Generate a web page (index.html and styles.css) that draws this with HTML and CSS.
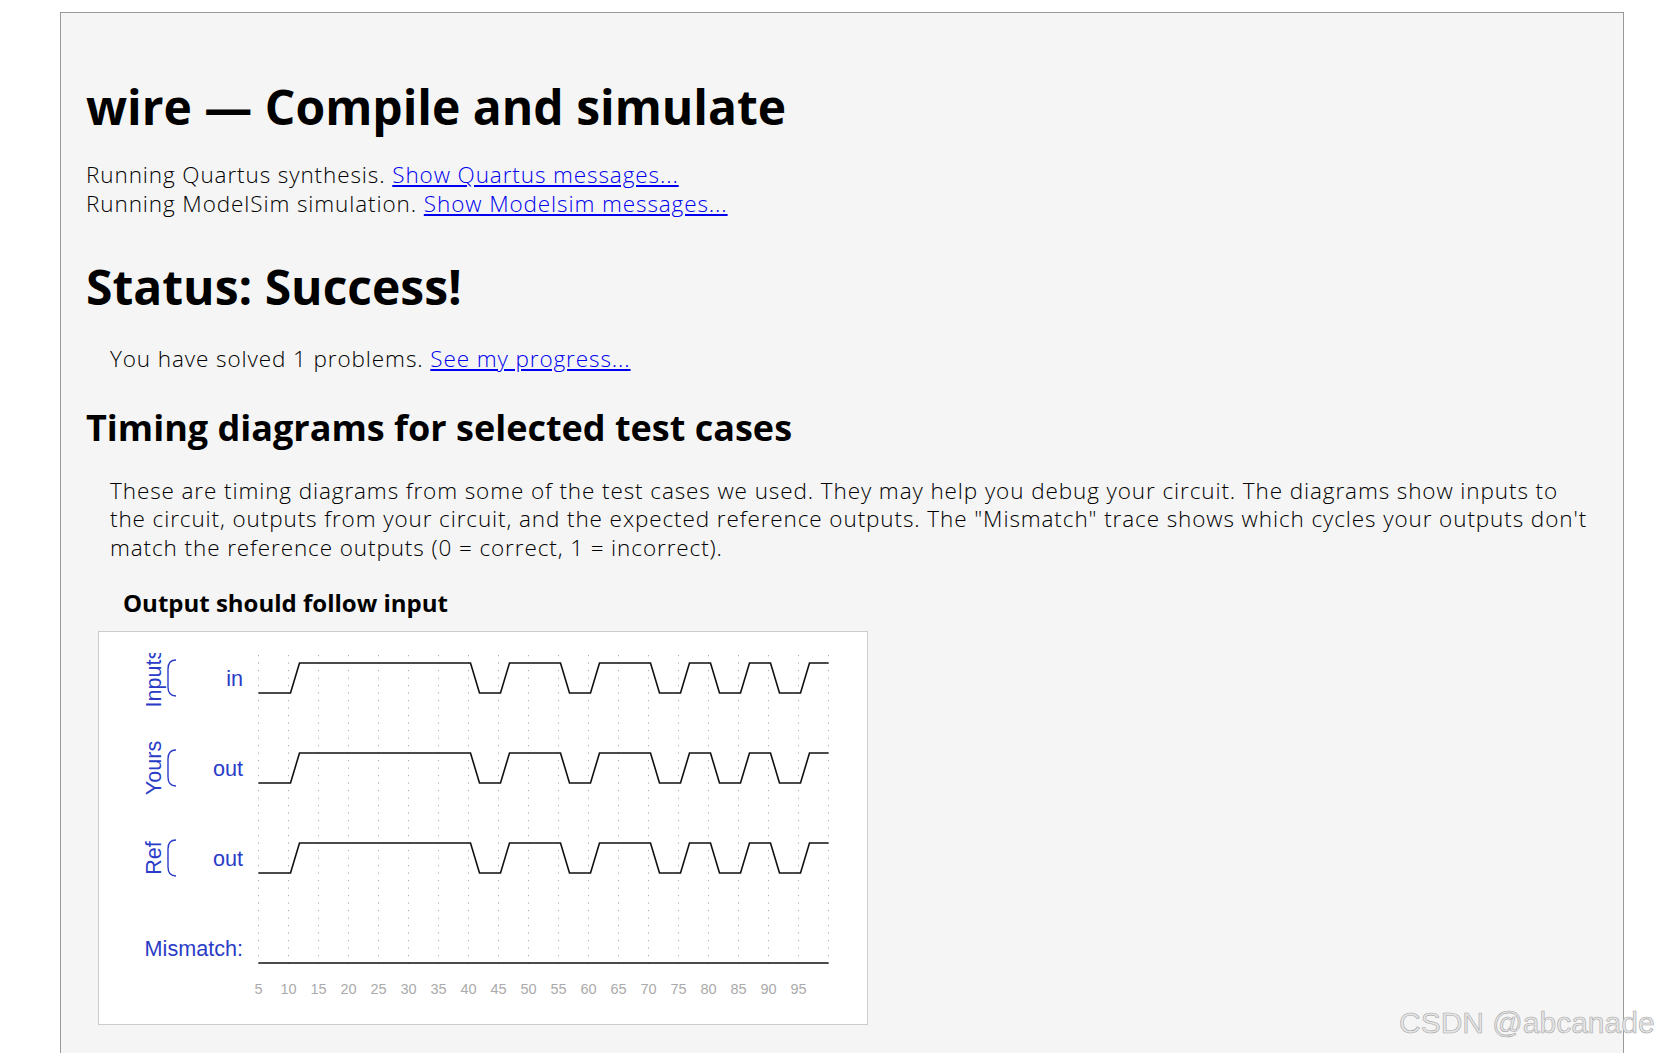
FILE: index.html
```html
<!DOCTYPE html>
<html lang="en">
<head>
<meta charset="utf-8">
<title>wire — Compile and simulate</title>
<link rel="stylesheet" href="styles.css">
</head>
<body>
<div class="page">
  <h1 class="title">wire — Compile and simulate</h1>
  <p class="log">Running Quartus synthesis. <a href="#">Show Quartus messages...</a><br>Running ModelSim simulation. <a href="#">Show Modelsim messages...</a></p>

  <h2 class="status">Status: Success!</h2>
  <p class="indent solved">You have solved 1 problems. <a href="#">See my progress...</a></p>

  <h2 class="section">Timing diagrams for selected test cases</h2>
  <p class="indent explain">These are timing diagrams from some of the test cases we used. They may help you debug your circuit. The diagrams show inputs to<br>the circuit, outputs from your circuit, and the expected reference outputs. The "Mismatch" trace shows which cycles your outputs don't<br>match the reference outputs (0 = correct, 1 = incorrect).</p>

  <h3 class="caption">Output should follow input</h3>
  <div class="diagram">
    <svg class="wave" width="768" height="392" viewBox="0 0 768 392" xmlns="http://www.w3.org/2000/svg">
      <defs>
        <clipPath id="plotclip"><rect x="0" y="21" width="768" height="371"/></clipPath>
        <path id="sig" d="M159.5,61 H191.5 L200.5,31 H371.5 L380.5,61 H401.5 L410.5,31 H461.5 L470.5,61 H491.5 L500.5,31 H551.5 L560.5,61 H581.5 L590.5,31 H611.5 L620.5,61 H641.5 L650.5,31 H671.5 L680.5,61 H701.5 L710.5,31 H729.5"/>
        <path id="brk" d="M77,28 Q69,28 69,37 V55 Q69,64 77,64"/>
      </defs>
      <g class="grid">
        <line x1="159.5" y1="23" x2="159.5" y2="338"/>
        <line x1="189.5" y1="23" x2="189.5" y2="338"/>
        <line x1="219.5" y1="23" x2="219.5" y2="338"/>
        <line x1="249.5" y1="23" x2="249.5" y2="338"/>
        <line x1="279.5" y1="23" x2="279.5" y2="338"/>
        <line x1="309.5" y1="23" x2="309.5" y2="338"/>
        <line x1="339.5" y1="23" x2="339.5" y2="338"/>
        <line x1="369.5" y1="23" x2="369.5" y2="338"/>
        <line x1="399.5" y1="23" x2="399.5" y2="338"/>
        <line x1="429.5" y1="23" x2="429.5" y2="338"/>
        <line x1="459.5" y1="23" x2="459.5" y2="338"/>
        <line x1="489.5" y1="23" x2="489.5" y2="338"/>
        <line x1="519.5" y1="23" x2="519.5" y2="338"/>
        <line x1="549.5" y1="23" x2="549.5" y2="338"/>
        <line x1="579.5" y1="23" x2="579.5" y2="338"/>
        <line x1="609.5" y1="23" x2="609.5" y2="338"/>
        <line x1="639.5" y1="23" x2="639.5" y2="338"/>
        <line x1="669.5" y1="23" x2="669.5" y2="338"/>
        <line x1="699.5" y1="23" x2="699.5" y2="338"/>
        <line x1="729.5" y1="23" x2="729.5" y2="338"/>
      </g>
      <g class="groups" clip-path="url(#plotclip)">
        <text transform="translate(62,46) rotate(-90)">Inputs</text>
        <text transform="translate(62,136) rotate(-90)">Yours</text>
        <text transform="translate(62,226) rotate(-90)">Ref</text>
      </g>
      <g class="brackets">
        <use href="#brk"/>
        <use href="#brk" transform="translate(0,90)"/>
        <use href="#brk" transform="translate(0,180)"/>
      </g>
      <g class="names">
        <text x="144" y="54">in</text>
        <text x="144" y="144">out</text>
        <text x="144" y="234">out</text>
        <text x="144" y="324">Mismatch:</text>
      </g>
      <g class="signals">
        <use href="#sig"/>
        <use href="#sig" transform="translate(0,90)"/>
        <use href="#sig" transform="translate(0,180)"/>
        <line x1="159.5" y1="331" x2="729.5" y2="331"/>
      </g>
      <g class="ticks">
        <text x="159.5" y="362">5</text>
        <text x="189.5" y="362">10</text>
        <text x="219.5" y="362">15</text>
        <text x="249.5" y="362">20</text>
        <text x="279.5" y="362">25</text>
        <text x="309.5" y="362">30</text>
        <text x="339.5" y="362">35</text>
        <text x="369.5" y="362">40</text>
        <text x="399.5" y="362">45</text>
        <text x="429.5" y="362">50</text>
        <text x="459.5" y="362">55</text>
        <text x="489.5" y="362">60</text>
        <text x="519.5" y="362">65</text>
        <text x="549.5" y="362">70</text>
        <text x="579.5" y="362">75</text>
        <text x="609.5" y="362">80</text>
        <text x="639.5" y="362">85</text>
        <text x="669.5" y="362">90</text>
        <text x="699.5" y="362">95</text>
      </g>
    </svg>
  </div>
</div>
<div class="watermark">CSDN @abcanade</div>
</body>
</html>
```

FILE: styles.css
```css
html, body {
  margin: 0;
  padding: 0;
  background: #ffffff;
  overflow: hidden;
  height: 100%;
}

body {
  position: relative;
  font-family: "Open Sans", "Lato", sans-serif;
  color: #000;
}

.page {
  margin: 12px 38px 0 60px;
  border: 1px solid #999999;
  background: #f5f5f5;
  padding: 0 25px 60px 25px;
}

.title,
.status,
.section,
.caption {
  font-family: "Open Sans", "Noto Sans", sans-serif;
  font-weight: 700;
  color: #000;
  letter-spacing: 0;
}

.title {
  font-size: 48px;
  line-height: 60px;
  margin: 64px 0 24px 0;
}

.log,
.indent {
  font-family: "Open Sans", "Lato", sans-serif;
  font-size: 22.5px;
  line-height: 28.6px;
  font-weight: 300;
  letter-spacing: 0.9px;
  margin: 0;
}

.log a,
.indent a {
  color: #0000ee;
  text-decoration: underline;
}

.status {
  font-size: 48px;
  line-height: 55px;
  margin: 41px 0 0 0;
}

.indent {
  margin-left: 24px;
}

.solved {
  margin-top: 31px;
}

.section {
  font-size: 36px;
  line-height: 42px;
  margin: 33px 0 0 0;
}

.explain {
  margin-top: 28px;
  white-space: nowrap;
}

.caption {
  font-size: 24px;
  line-height: 30px;
  margin: 25px 0 0 37px;
}

.diagram {
  margin: 13px 0 0 12px;
  width: 768px;
  height: 392px;
  border: 1px solid #cccccc;
  background: #ffffff;
}

.wave {
  display: block;
}

.grid line {
  stroke: #aaaaaa;
  stroke-width: 1;
  stroke-dasharray: 1.2 6.3;
}

.groups text {
  font-family: "Liberation Sans", Arial, sans-serif;
  font-size: 21.6px;
  fill: #2a3cc7;
  text-anchor: middle;
}

.brackets use {
  fill: none;
  stroke: #2a3cc7;
  stroke-width: 1.4;
}

.names text {
  font-family: "Liberation Sans", Arial, sans-serif;
  font-size: 21.6px;
  fill: #2a3cc7;
  text-anchor: end;
}

.signals use,
.signals line {
  fill: none;
  stroke: #111111;
  stroke-width: 1.6;
}

.ticks text {
  font-family: "Liberation Sans", Arial, sans-serif;
  font-size: 14.5px;
  fill: #aaaaaa;
  text-anchor: middle;
}

.watermark {
  position: absolute;
  left: 1399px;
  top: 1008px;
  font-family: "Liberation Sans", Arial, sans-serif;
  font-size: 30px;
  line-height: 30px;
  color: #e6e6e6;
  -webkit-text-stroke: 0.6px #a8a8a8;
  white-space: nowrap;
}
```
